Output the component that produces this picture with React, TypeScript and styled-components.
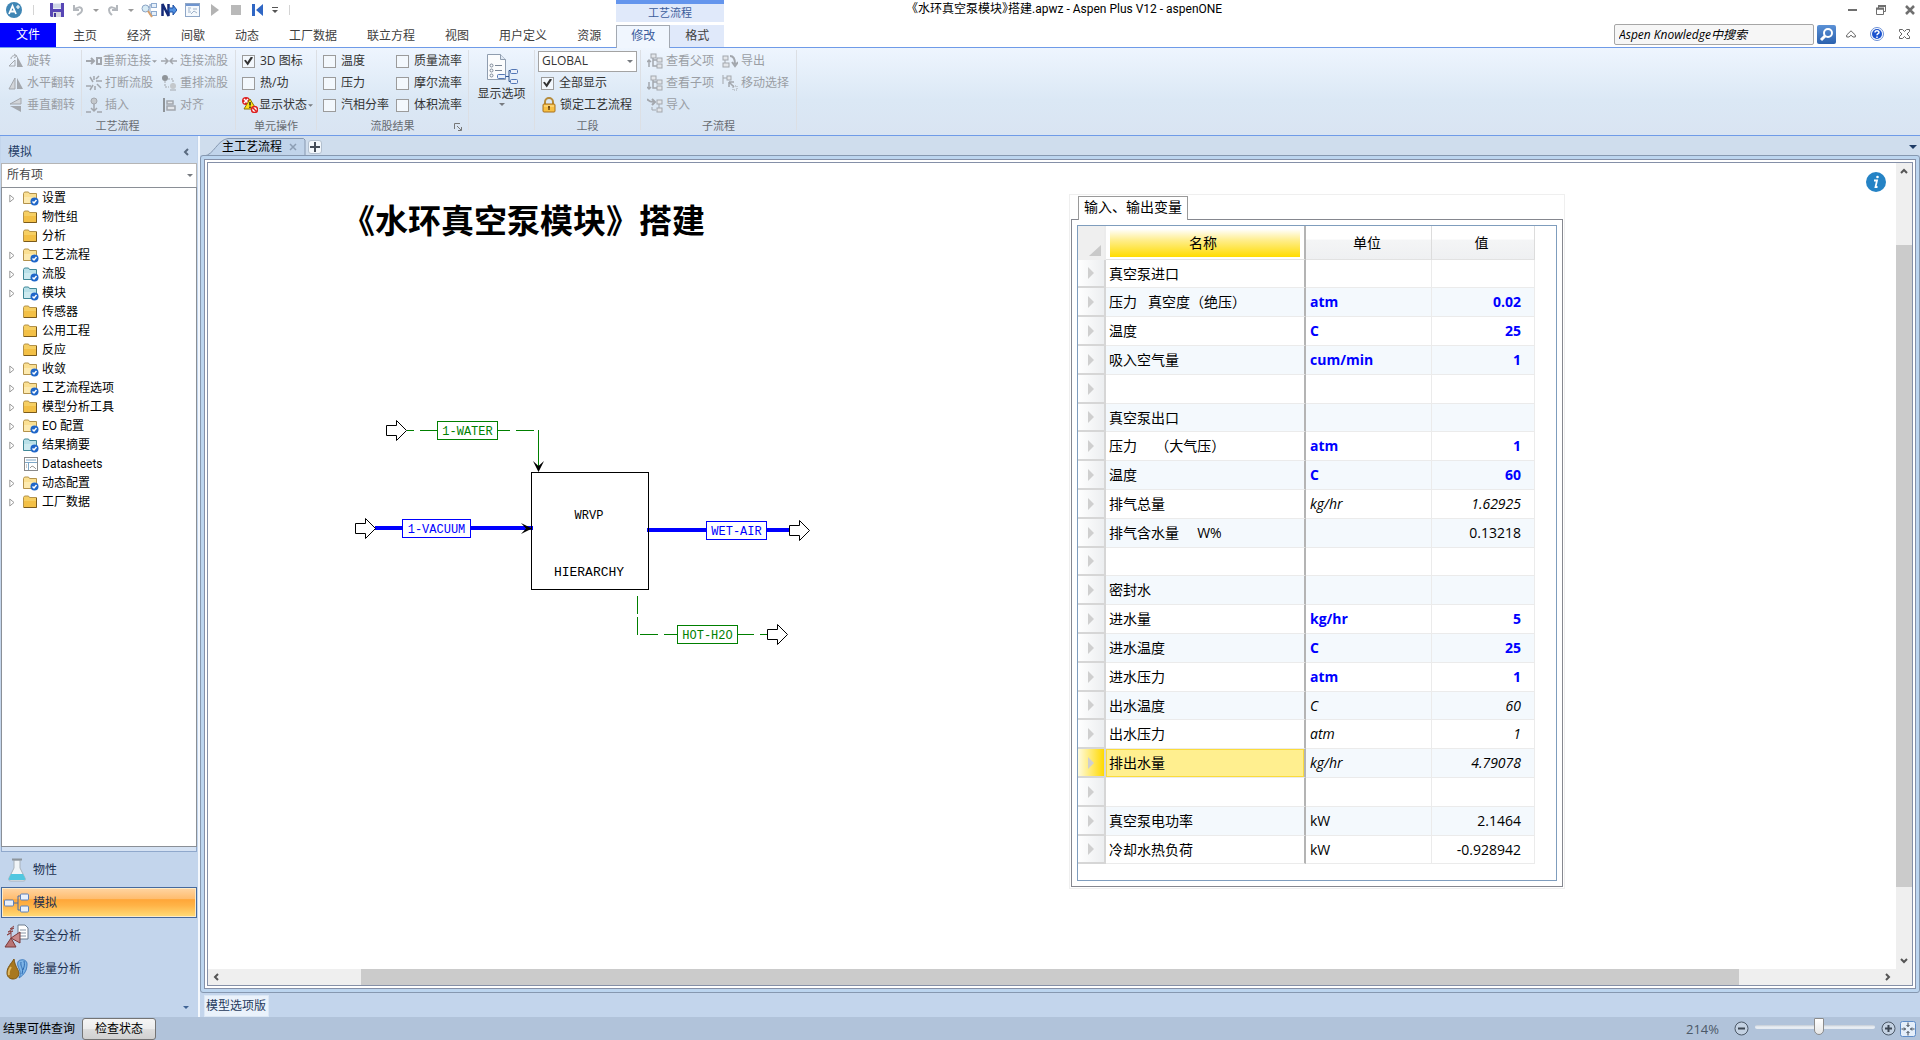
import React from "react";
import styled, { createGlobalStyle, css } from "styled-components";

const GlobalStyle = createGlobalStyle`
  *, *::before, *::after { box-sizing: border-box; }
  html, body, #root { height: 100%; }
  body {
    margin: 0;
    overflow: hidden;
    background: #ffffff;
    font-family: "Open Sans", "Noto Sans CJK SC", sans-serif;
    font-size: 12px;
    line-height: 18px;
    color: #000000;
  }
  button, input, select {
    font: inherit;
    color: inherit;
    margin: 0;
    padding: 0;
    border: 0;
    background: none;
    border-radius: 0;
  }
  svg { display: block; flex: none; }
  ul { list-style: none; margin: 0; padding: 0; }
`;

const Window = styled.div`
  display: flex;
  flex-direction: column;
  height: 100vh;
`;

/* ---------- title bar and tabs ---------- */

const Header = styled.header`
  flex: none;
  display: grid;
  grid-template-columns: 616px 108px 1fr 306px;
  grid-template-rows: 23px 24px;
  border-bottom: 1px solid #6f9be8;
  background: #ffffff;
`;

const QuickAccess = styled.div`
  display: flex;
  align-items: center;
  height: 20px;
  padding-left: 6px;
`;

const ToolButton = styled.button<{ $w: number }>`
  width: ${(p) => p.$w}px;
  height: 20px;
  display: flex;
  align-items: center;
  justify-content: center;
`;

const Divider = styled.span<{ $before: number; $after: number }>`
  width: 1px;
  height: 10px;
  margin: 0 ${(p) => p.$after}px 0 ${(p) => p.$before}px;
  background: #d4d4d4;
`;

const ContextTitle = styled.div`
  height: 22px;
  border-top: 4px solid #6495ed;
  background: #e0e9fa;
  color: #3b5c9c;
  text-align: center;
  font-size: 11px;
  line-height: 17px;
`;

const WindowTitle = styled.h1`
  grid-column: 3 / 4;
  margin: 0;
  padding-left: 188px;
  font-family: Roboto, "Noto Sans CJK SC", sans-serif;
  font-feature-settings: "halt";
  font-size: 12px;
  font-weight: 400;
  line-height: 18px;
  white-space: nowrap;
`;

const WindowButtons = styled.div`
  display: flex;
  justify-content: flex-end;
  gap: 9px;
  height: 18px;
`;

const Tabs = styled.nav`
  grid-column: 1 / 4;
  display: flex;
  height: 24px;
`;

const tabBox = css`
  height: 24px;
  padding: 2px 15px 0;
  color: #404040;
  white-space: nowrap;
  line-height: 20px;
`;

const FileTab = styled.button`
  width: 56px;
  margin-right: 2px;
  background: #0000ff;
  color: #ffffff;
`;

const Tab = styled.button<{ $kind?: "active" | "context" }>`
  ${tabBox}
  ${(p) =>
    p.$kind === "active" &&
    css`
      height: 23px;
      margin-top: 2px;
      padding: 0 14px 2px;
      border: 1px solid #a3a9b2;
      border-bottom: 0;
      background: #f0f6fe;
      color: #3b5c9c;
      z-index: 1;
    `}
  ${(p) =>
    p.$kind === "context" &&
    css`
      height: 22px;
      margin-top: 2px;
      padding-top: 0;
      background: #e0e9fa;
    `}
`;

const SearchArea = styled.div`
  display: flex;
  align-items: center;
  height: 22px;
`;

const SearchBox = styled.input`
  width: 200px;
  height: 21px;
  padding: 0 4px;
  border: 1px solid #a6a6a6;
  border-radius: 2px;
  background: #f6f6f6;
  font-style: italic;
  &::placeholder {
    color: #000000;
    opacity: 1;
    font-style: italic;
  }
`;

const SearchButton = styled.button`
  width: 19px;
  height: 19px;
  margin: 0 5px 0 3px;
  display: flex;
  align-items: center;
  justify-content: center;
  border-radius: 2px;
  background: linear-gradient(#5b91d6, #2c62ae);
`;

/* ---------- ribbon ---------- */

const Ribbon = styled.section`
  flex: none;
  display: flex;
  height: 88px;
  padding: 2px 0 0;
  border-bottom: 1px solid #6f9be8;
  background: linear-gradient(#eef5fe, #dbe8f5 60%, #d9e4f2);
`;

const Group = styled.div<{ $w: number }>`
  flex: none;
  width: ${(p) => p.$w}px;
  border-right: 1px solid transparent;
  border-image: linear-gradient(to bottom, #dcdfe4 0 79px, transparent 79px) 1;
  display: flex;
  flex-direction: column;
`;

const GroupBody = styled.div`
  display: flex;
  height: 66px;
`;

const GroupCaption = styled.div`
  position: relative;
  text-align: center;
  font-size: 11px;
  line-height: 19px;
  color: #666a70;
`;

const Launcher = styled.button`
  position: absolute;
  right: 6px;
  top: 7px;
`;

const Column = styled.div<{ $w: number; $ruled?: boolean; $pad?: number }>`
  width: ${(p) => p.$w}px;
  padding-left: ${(p) => p.$pad ?? 5}px;
  border-right: ${(p) => (p.$ruled ? "1px solid #dcdfe4" : "0")};
`;

const Command = styled.button<{ $muted?: boolean; $gap?: number }>`
  display: flex;
  align-items: center;
  gap: ${(p) => p.$gap ?? 3}px;
  height: 22px;
  color: ${(p) => (p.$muted ? "#9a9ea4" : "#333333")};
  white-space: nowrap;
`;

const CheckLabel = styled.label`
  display: flex;
  align-items: center;
  gap: 5px;
  height: 22px;
  color: #333333;
  white-space: nowrap;
`;

const CheckInput = styled.input`
  appearance: none;
  width: 13px;
  height: 13px;
  border: 1px solid #9b9b9b;
  background: #f3f8fd;
  display: grid;
  place-content: center;
  &:checked::before {
    content: "";
    width: 9px;
    height: 9px;
    background: #333333;
    clip-path: polygon(0 45%, 20% 35%, 38% 62%, 78% 0, 100% 12%, 42% 100%);
  }
`;

const BigCommand = styled.button`
  width: 100%;
  height: 66px;
  padding-top: 3px;
  display: flex;
  flex-direction: column;
  align-items: center;
  color: #333333;
`;

const SelectWrap = styled.div<{ $h: number }>`
  display: grid;
  align-items: center;
  height: ${(p) => p.$h}px;
  & > * { grid-area: 1 / 1; }
  & > svg { justify-self: end; margin-right: 4px; pointer-events: none; }
`;

const SectionSelect = styled.select`
  appearance: none;
  height: 21px;
  padding: 0 3px;
  border: 1px solid #a3a3a3;
  background: #ffffff;
  color: #333333;
`;

/* ---------- work area ---------- */

const Work = styled.div`
  flex: 1;
  min-height: 0;
  display: flex;
`;

const Side = styled.aside`
  flex: none;
  width: 200px;
  padding: 0 1px;
  border-right: 2px solid #f4f8fd;
  background: #c3d5ec;
  display: flex;
  flex-direction: column;
`;

const SideTitle = styled.div`
  display: flex;
  justify-content: space-between;
  align-items: center;
  height: 27px;
  padding: 4px 7px 0 7px;
  background: #cadbf0;
  color: #1e3c66;
`;

const ItemSelect = styled.select`
  appearance: none;
  height: 24px;
  padding: 0 5px 2px;
  border: 1px solid #b5b5b5;
  border-bottom: 0;
  background: #ffffff;
  color: #444444;
`;

const Tree = styled.ul`
  flex: 1;
  min-height: 0;
  padding: 1px 0;
  border: 1px solid #8a8f96;
  background: #ffffff;
`;

const TreeRow = styled.button`
  display: grid;
  grid-template-columns: 15px 15px auto;
  column-gap: 4px;
  align-items: center;
  height: 19px;
  padding-left: 2px;
  font-family: Roboto, "Noto Sans CJK SC", sans-serif;
  line-height: 19px;
  white-space: nowrap;
`;

const ExpanderBox = styled.span`
  display: block;
  padding-left: 5px;
`;

const Splitter = styled.div`
  height: 5px;
  border: 1px solid #8fa8cc;
  border-top: 0;
  background: #d5e2f3;
`;

const NavItem = styled.button<{ $active?: boolean }>`
  display: grid;
  grid-template-columns: 25px auto;
  column-gap: 4px;
  justify-content: start;
  justify-items: center;
  align-items: center;
  width: 100%;
  height: 31px;
  margin-top: 2px;
  padding-left: 2px;
  border: 1px solid transparent;
  color: #1a2f4f;
  ${(p) =>
    p.$active &&
    css`
      border-color: #46699c;
      box-shadow: inset 0 0 0 1px #fdebc8;
      background: linear-gradient(#ffd5a3, #ffbc6d 38%, #ffa638 40%, #ffb347 60%, #ffdc78);
    `}
`;

const SideFooter = styled.div`
  height: 33px;
  padding: 14px 8px 0 0;
  display: flex;
  justify-content: flex-end;
`;

const Main = styled.main`
  flex: 1;
  min-width: 0;
  display: flex;
  flex-direction: column;
  background: #c3d5ec;
`;

const SheetTabs = styled.div`
  display: flex;
  height: 19px;
  padding: 2px 2px 0 4px;
  background: #cfdded;
`;

const SheetTab = styled.div`
  display: grid;
  width: 101px;
  height: 18px;
  & > * { grid-area: 1 / 1; }
`;

const SheetLabel = styled.div`
  display: flex;
  align-items: center;
  gap: 7px;
  padding-left: 18px;
  z-index: 1;
`;

const AddSheet = styled.button`
  width: 14px;
  height: 14px;
  margin: 2px auto 0 3px;
  display: grid;
  place-content: center;
  border: 1px solid #b3c0cf;
  border-radius: 3px;
  background: #f3f7fb;
`;

const SheetMenu = styled.button`
  width: 11px;
  height: 17px;
  display: grid;
  place-content: center;
`;

const Frame = styled.div`
  flex: 1;
  min-height: 0;
  display: flex;
  padding: 3px;
  border: 1px solid #8698b0;
  border-radius: 3px;
  background: #bcd5ef;
`;

const FrameInner = styled.div`
  flex: 1;
  display: flex;
  padding: 2px;
  border: 1px solid #8590a8;
  background: #ffffff;
`;

const Viewport = styled.div`
  flex: 1;
  min-width: 0;
  display: grid;
  grid-template-columns: 1fr 16px;
  grid-template-rows: 1fr 16px;
  border: 1px solid #8590a8;
  background: #efefef;
`;

const Canvas = styled.div`
  position: relative;
  overflow: hidden;
  background: #ffffff;
`;

const CanvasTitle = styled.h2`
  position: absolute;
  left: 134px;
  top: 32px;
  margin: 0;
  font-family: "Noto Sans CJK SC", sans-serif;
  font-size: 33px;
  line-height: 48px;
  font-weight: 700;
  white-space: nowrap;
`;

const Diagram = styled.svg`
  position: absolute;
  left: 122px;
  top: 237px;
  font-family: "Liberation Mono", monospace;
  text-anchor: middle;
`;

const InfoButton = styled.button`
  position: absolute;
  right: 10px;
  top: 9px;
`;

const ScrollBar = styled.div<{ $vertical?: boolean }>`
  display: flex;
  flex-direction: ${(p) => (p.$vertical ? "column" : "row")};
  background: #efefef;
`;

const ScrollArrow = styled.button`
  flex: none;
  width: 16px;
  height: 16px;
  display: grid;
  place-content: center;
`;

const ScrollSpace = styled.div<{ $grow: number }>`
  flex: ${(p) => p.$grow} 0 0;
`;

const ScrollThumb = styled.div<{ $grow: number }>`
  flex: ${(p) => p.$grow} 0 0;
  background: #cbcbcb;
`;

const BottomTabs = styled.div`
  flex: none;
  display: flex;
  height: 24px;
  padding: 2px 0 0 4px;
`;

const BottomTab = styled.button`
  height: 22px;
  padding: 0 2px 0 1px;
  background: #eaf2fb;
  border: 1px solid #dbe7f5;
  color: #24395c;
`;

/* ---------- variable table ---------- */

const VariablePanel = styled.section`
  position: absolute;
  left: 861px;
  top: 31px;
  padding: 1px;
  border: 1px solid #efefef;
  background: #ffffff;
`;

const PanelTab = styled.button`
  display: block;
  height: 24px;
  margin: 0 0 -1px 7px;
  padding: 0 5px 3px;
  border: 1px solid #9a9a9a;
  border-bottom: 0;
  background: #ffffff;
  position: relative;
  font-size: 14px;
  line-height: 20px;
`;

const PanelBorder = styled.div`
  padding: 5px;
  border: 1px solid #85878f;
`;

const PanelInner = styled.div`
  padding: 0 21px 16px 0;
  border: 1px solid #7f9dbd;
`;

const Table = styled.table`
  border-collapse: separate;
  border-spacing: 0;
  table-layout: fixed;
  width: 457px;
  font-size: 14px;
  line-height: 20px;
  th, td { padding: 0; font-weight: 400; white-space: pre; }
`;

const CornerCell = styled.th`
  width: 28px;
  border-right: 2px solid #ececec;
  background: #efefef;
  vertical-align: bottom;
  & > svg { margin: 0 3px 4px auto; }
`;

const HeadCell = styled.th<{ $w: number }>`
  width: ${(p) => p.$w}px;
  height: 34px;
  border-right: 1px solid #dcdcdc;
  border-bottom: 1px solid #e2e2e2;
  background: linear-gradient(#ffffff 40%, #f4f5f6 42%, #eff0f2);
  && { padding-right: 3px; }
`;

const NameHead = styled.th`
  width: 200px;
  height: 34px;
  border-right: 2px solid #b4b4b4;
  border-bottom: 1px solid #e2e2e2;
  background: #ffffff;
`;

const NameHighlight = styled.div`
  height: 28px;
  margin: 2px 4px 1px;
  padding-right: 4px;
  line-height: 28px;
  background: linear-gradient(#ffffff, #ffee8c 40%, #ffdc00);
`;

const Row = styled.tr`
  height: 29px;
  &:nth-child(5n + 1) { height: 28px; }
  td { border-bottom: 1px solid #ebebeb; border-right: 1px solid #ebebeb; }
  &:nth-child(even) td { background: #f4f9fd; }
`;

const RowHead = styled.th<{ $selected?: boolean }>`
  border-right: 2px solid #d6d6d6;
  border-bottom: 2px solid #d6d6d6;
  background: ${(p) =>
    p.$selected ? "linear-gradient(to right, #fffbe0, #ffd900)" : "linear-gradient(to right, #ffffff, #eceef0)"};
  & > svg { margin-left: 10px; }
`;

const NameCell = styled.td<{ $selected?: boolean }>`
  &&& {
    padding-left: 3px;
    border-right: 2px solid #b4b4b4;
    ${(p) =>
      p.$selected &&
      css`
        background: #ffef8f;
        box-shadow: inset 0 0 0 1px #fbdc3c;
      `}
  }
`;

type Style = "input" | "result" | "plain";

const Value = styled.span<{ $style: Style }>`
  ${(p) => p.$style === "input" && css`font-weight: 700; color: #0000ff;`}
  ${(p) => p.$style === "result" && css`font-style: italic;`}
`;

const UnitCell = styled.td`
  && { padding-left: 4px; }
`;

const NumberCell = styled.td`
  && { padding-right: 13px; text-align: right; }
`;

/* ---------- status bar ---------- */

const StatusBar = styled.footer`
  flex: none;
  display: flex;
  align-items: center;
  height: 23px;
  padding-left: 3px;
  background: #b1c3da;
`;

const CheckButton = styled.button`
  width: 74px;
  height: 22px;
  margin-left: 7px;
  border: 1px solid #747474;
  border-radius: 3px;
  background: linear-gradient(#f5f5f5, #ececec 50%, #dddddd 52%, #d0d0d0);
`;

const ZoomArea = styled.div`
  display: flex;
  align-items: center;
  margin-left: auto;
`;

const ZoomText = styled.output`
  width: 48px;
  font-size: 13px;
  color: #4c5968;
`;

const ZoomSlider = styled.input`
  appearance: none;
  width: 120px;
  height: 22px;
  margin: 0 6px 4px;
  &::-webkit-slider-runnable-track {
    height: 4px;
    border-radius: 2px;
    background: linear-gradient(#c4cbd4, #e9eef4 50%, #e4eaf1);
  }
  &::-webkit-slider-thumb {
    appearance: none;
    width: 10px;
    height: 17px;
    margin-top: -7px;
    background: linear-gradient(#ffffff, #e6e6e6);
    border: 1px solid #8c8c8c;
    border-radius: 1px 1px 5px 5px;
  }
`;

/* ---------- small drawings ---------- */

const Caret = ({ color = "#777b80", w = 6 }: { color?: string; w?: number }) => (
  <svg width={w} height={Math.ceil(w / 2)} viewBox="0 0 6 3">
    <path d="M0 0h6L3 3z" fill={color} />
  </svg>
);

const Chevron = ({ turn = 0, color = "#555" }: { turn?: number; color?: string }) => (
  <svg width="8" height="8" viewBox="0 0 8 8">
    <path d="M1 6 4 3l3 3" fill="none" stroke={color} strokeWidth="2" transform={`rotate(${turn} 4 4)`} />
  </svg>
);

type IconName =
  | "rotate" | "flipH" | "flipV" | "reconnect" | "break" | "insert" | "connect" | "reroute" | "align"
  | "status" | "lock" | "parent" | "child" | "import" | "export" | "move";

const G = "#a3a7ad";
const grayBox = { fill: "#e3e6ea", stroke: G };

const icons: Record<IconName, React.ReactNode> = {
  rotate: (<><path d="M1 13 7 7v6z" fill="none" stroke={G} /><path d="M9 3v11h6z" fill={G} /><path d="M3 6c0-3 3-4 5-3M6 1l3 2-3 2" fill="none" stroke={G} /></>),
  flipH: (<><path d="M1 14 7 3v11z" fill="#d3d6da" stroke={G} /><path d="M9 3v11h6z" fill={G} /></>),
  flipV: (<><path d="M2 7 13 1v6z" fill="#d3d6da" stroke={G} /><path d="M2 9h11v6z" fill={G} /></>),
  reconnect: (<><path d="M0 8h8M5 5l3 3-3 3" fill="none" stroke={G} strokeWidth="2" /><rect x="11" y="5" width="4" height="6" fill="none" stroke={G} strokeWidth="2" /></>),
  break: (<path d="M0 11h5M10 6h6M7 7 4 2M8 5V1M10 4l3-3M7 10l-3 5M9 11v4M11 9l4 4" fill="none" stroke={G} strokeWidth="1.5" />),
  insert: (<><circle cx="8" cy="4" r="3" fill="#c4c8cc" stroke={G} /><path d="M8 7v7M5 11l3 3 3-3M0 15h5M11 15h5" fill="none" stroke={G} strokeWidth="1.5" /></>),
  connect: (<path d="M0 8h7M4 5l3 3-3 3M16 8H9M12 5 9 8l3 3" fill="none" stroke={G} strokeWidth="1.5" />),
  reroute: (<><circle cx="4" cy="3" r="3" fill="#8f9499" /><path d="M4 6v6h4M7 4h5v5" fill="none" stroke={G} strokeDasharray="2 1" /><circle cx="12" cy="11" r="3" fill="#c4c8cc" /><path d="M9 15h6" stroke={G} /></>),
  align: (<><path d="M3 1v14" stroke="#8f9499" strokeWidth="2" /><path d="M6 4h6v3H6zM6 9h8v4H6z" fill="#e3e6ea" stroke={G} strokeWidth="1.5" /></>),
  status: (<><circle cx="4" cy="4" r="4" fill="#dd1f1f" /><path d="m2 2 4 4m0-4L2 6" stroke="#fff" strokeWidth="1.5" /><path d="M8 2 14 12H2z" fill="#ffe21a" stroke="#8a7400" /><path d="M8 5v3.500M8 9.500v1.500" stroke="#222" strokeWidth="1.500" /><circle cx="12.500" cy="12.500" r="3" fill="#fff" stroke="#dd1f1f" strokeWidth="1.500" /><path d="m10.500 10.500 4 4" stroke="#dd1f1f" strokeWidth="1.500" /></>),
  lock: (<><path d="M4 7V5a4 4 0 0 1 8 0v2" fill="none" stroke="#b58b3a" strokeWidth="2" /><rect x="2" y="7" width="12" height="8" rx="1" fill="#f7c044" stroke="#a8701c" /><path d="M3 9h10" stroke="#ffe39a" /><path d="M8 9v4M7 10h2" stroke="#6b4510" strokeWidth="1.500" /></>),
  parent: (<><rect x="4" y="1" width="5" height="4" {...grayBox} /><rect x="10" y="5" width="5" height="4" {...grayBox} /><rect x="10" y="11" width="5" height="4" {...grayBox} /><path d="M6 5v8h4M6 7h4M2 14V7M0 9l2-2 2 2" fill="none" stroke={G} strokeWidth="1.500" /></>),
  child: (<><rect x="4" y="1" width="5" height="4" {...grayBox} /><rect x="10" y="5" width="5" height="4" {...grayBox} /><rect x="10" y="11" width="5" height="4" {...grayBox} /><path d="M6 5v8h4M6 7h4M2 7v7M0 12l2 2 2-2" fill="none" stroke={G} strokeWidth="1.500" /></>),
  import: (<><path d="M0 2c2 3 4 3 7 3M5 2l3 3-3 3" fill="none" stroke={G} strokeWidth="2" /><rect x="10" y="3" width="5" height="4" {...grayBox} /><rect x="10" y="11" width="5" height="4" {...grayBox} /><path d="M12 7v4M9 13H5v-3" fill="none" stroke={G} /></>),
  export: (<><rect x="1" y="3" width="5" height="4" {...grayBox} /><rect x="1" y="10" width="6" height="4" {...grayBox} /><path d="M3 7v3" stroke={G} /><path d="M8 3c4 0 5 3 5 8M10 9l3 4 3-4" fill="none" stroke={G} strokeWidth="2" /></>),
  move: (<><path d="M1 0v9M1 3h4" stroke={G} /><rect x="5" y="1" width="4" height="4" {...grayBox} /><path d="M7 7h5M7 7v5M7 7l5 5" stroke={G} strokeWidth="1.500" /><path d="M11 11h4v4h-4z" fill="none" stroke={G} strokeDasharray="1 1" /></>),
};

const Icon = ({ name }: { name: IconName }) => (
  <svg width="16" height="16" viewBox="0 0 16 16">{icons[name]}</svg>
);

const DisplayOptionsIcon = () => (
  <svg width="32" height="32" viewBox="0 0 32 32">
    <path d="M1.500 1.500h13l5 5v20h-18z" fill="#fbfcfd" stroke="#8f9daf" />
    <path d="M14.500 1.500v5h5" fill="#dfe8f3" stroke="#8f9daf" />
    <g fill="none" stroke="#7a8696"><circle cx="5.500" cy="12.500" r="1.500" /><circle cx="5.500" cy="17.500" r="1.500" /><circle cx="5.500" cy="22.500" r="1.500" /><path d="M9 12.500h7M9 17.500h7" /></g>
    <path d="M19 23.500h4v-6h2M23 23.500v5h2" fill="none" stroke="#35578f" />
    <g fill="#e9f0fb" stroke="#5377b5"><rect x="11.500" y="21.500" width="8" height="4" rx="1" /><rect x="24.500" y="16.500" width="7" height="4" rx="1" /><rect x="24.500" y="26.500" width="7" height="4" rx="1" /></g>
  </svg>
);

type FolderKind = "plain" | "done" | "results" | "sheet";

const TreeIcon = ({ kind }: { kind: FolderKind }) => {
  if (kind === "sheet")
    return (
      <svg width="16" height="15" viewBox="0 0 16 15">
        <rect x="1.500" y=".5" width="13" height="13" fill="#fff" stroke="#8a8a8a" />
        <path d="M3 3h10M2 5.500h12M5.500 6v7" stroke="#7fa8c8" />
        <path d="M7 11l2-2 2 1 2 2M3 8h1M3 10h1" fill="none" stroke="#999" />
      </svg>
    );
  const teal = kind === "results";
  const open = kind !== "plain";
  return (
    <svg width="16" height="15" viewBox="0 0 16 15">
      <path d="M.5 12.500V2.500l1-1.500h4l1 1.500h7v10z" fill={teal ? "#b9e0e8" : open ? "#fbe093" : "#f6cf63"} stroke={teal ? "#3f8797" : "#b3924b"} />
      <path d="M1 6h12v6H1z" fill={teal ? "#d5eef2" : open ? "#fdeebb" : "#f2b93b"} opacity=".7" />
      {!open && <path d="M13.500 3v9.500H1" fill="none" stroke="#7a5a1c" />}
      {open && (
        <>
          <circle cx="11.500" cy="10.500" r="4" fill="#1f66c9" />
          <path d="m9.500 10.500 1.500 1.500 2.500-3" fill="none" stroke="#fff" strokeWidth="1.500" />
        </>
      )}
    </svg>
  );
};

const Expander = () => (
  <svg width="6" height="9" viewBox="0 0 6 9">
    <path d="M.8 1v7L5 4.500z" fill="#fff" stroke="#9a9a9a" />
  </svg>
);

const RowArrow = () => (
  <svg width="7" height="12" viewBox="0 0 7 12">
    <path d="M0 0v12l6-6z" fill="#cfcfcf" />
  </svg>
);

const FlaskIcon = () => (
  <svg width="24" height="24" viewBox="0 0 24 24">
    <path d="M9 2v8L4 20c-1 2 0 3 2 3h12c2 0 3-1 2-3l-5-10V2z" fill="#f1f5f8" stroke="#a9b2ba" />
    <path d="M6 16 4 20c-1 2 0 2 2 2h12c2 0 3 0 2-2l-2-4z" fill="#52c7e0" />
    <path d="M7 1.500h10" stroke="#8d959c" strokeWidth="2" />
  </svg>
);

const FlowIcon = () => (
  <svg width="25" height="22" viewBox="0 0 25 22">
    <path d="M9 11h5M17 4h-3v14h3" fill="none" stroke="#4a6ea6" />
    <g fill="#eaf1fb" stroke="#5c80ba"><rect x=".5" y="8" width="9" height="6" rx="1" /><rect x="16.500" y="2" width="8" height="6" rx="1" /><rect x="16.500" y="14" width="8" height="6" rx="1" /></g>
  </svg>
);

const SafetyIcon = () => (
  <svg width="25" height="24" viewBox="0 0 25 24">
    <path d="M14 1h7l3 3v11H14z" fill="#fff" stroke="#6d7c8e" />
    <path d="M16 6h6M16 9h6M16 12h6" stroke="#8795a5" />
    <path d="M1 23 7 14l5 9z" fill="#b97474" stroke="#7b3a3a" />
    <path d="m7 14 9-6v11z" fill="#c98a8a" stroke="#7b3a3a" />
    <path d="M7 14V9L3 11l6-4-5 1 6-4-4 1 4-3" fill="none" stroke="#8e4545" />
  </svg>
);

const EnergyIcon = () => (
  <svg width="22" height="22" viewBox="0 0 22 22">
    <path d="M8 1C5 6 1 9 1 15c0 4 3 6 6 6 4 0 6-3 6-6 0-3-4-6-5-14z" fill="#a87820" stroke="#7b5510" />
    <path d="M5 9c-2 3-3 5-2 8" stroke="#e0b860" fill="none" strokeWidth="2" />
    <path d="M13 20c6-4 8-8 8-14 0-3-3-5-6-4-3 0-4 3-3 6 1 4 4 6 1 12z" fill="#7db4e6" stroke="#3d7cc0" />
    <path d="M15 4c-1 5 3 6 1 12M18 3c1 4 0 6-1 9" stroke="#2f6cb3" fill="none" />
  </svg>
);

/* ---------- data ---------- */

const tabs = ["主页", "经济", "间歇", "动态", "工厂数据", "联立方程", "视图", "用户定义", "资源"];

const tree: { label: string; kind: FolderKind; expandable?: boolean }[] = [
  { label: "设置", kind: "done", expandable: true },
  { label: "物性组", kind: "plain" },
  { label: "分析", kind: "plain" },
  { label: "工艺流程", kind: "done", expandable: true },
  { label: "流股", kind: "results", expandable: true },
  { label: "模块", kind: "results", expandable: true },
  { label: "传感器", kind: "plain" },
  { label: "公用工程", kind: "plain" },
  { label: "反应", kind: "plain" },
  { label: "收敛", kind: "done", expandable: true },
  { label: "工艺流程选项", kind: "done", expandable: true },
  { label: "模型分析工具", kind: "plain", expandable: true },
  { label: "EO 配置", kind: "done", expandable: true },
  { label: "结果摘要", kind: "results", expandable: true },
  { label: "Datasheets", kind: "sheet" },
  { label: "动态配置", kind: "done", expandable: true },
  { label: "工厂数据", kind: "plain", expandable: true },
];

const variables: { name: string; unit?: string; value?: string; style?: Style; selected?: boolean }[] = [
  { name: "真空泵进口" },
  { name: "压力   真空度（绝压）", unit: "atm", value: "0.02", style: "input" },
  { name: "温度", unit: "C", value: "25", style: "input" },
  { name: "吸入空气量", unit: "cum/min", value: "1", style: "input" },
  { name: "" },
  { name: "真空泵出口" },
  { name: "压力     （大气压）", unit: "atm", value: "1", style: "input" },
  { name: "温度", unit: "C", value: "60", style: "input" },
  { name: "排气总量", unit: "kg/hr", value: "1.62925", style: "result" },
  { name: "排气含水量     W%", value: "0.13218" },
  { name: "" },
  { name: "密封水" },
  { name: "进水量", unit: "kg/hr", value: "5", style: "input" },
  { name: "进水温度", unit: "C", value: "25", style: "input" },
  { name: "进水压力", unit: "atm", value: "1", style: "input" },
  { name: "出水温度", unit: "C", value: "60", style: "result" },
  { name: "出水压力", unit: "atm", value: "1", style: "result" },
  { name: "排出水量", unit: "kg/hr", value: "4.79078", style: "result", selected: true },
  { name: "" },
  { name: "真空泵电功率", unit: "kW", value: "2.1464" },
  { name: "冷却水热负荷", unit: "kW", value: "-0.928942" },
];

/* ---------- parts ---------- */

const Check = ({ label, on }: { label: string; on?: boolean }) => (
  <CheckLabel>
    <CheckInput type="checkbox" defaultChecked={on} />
    {label}
  </CheckLabel>
);

const TopBar = () => (
  <Header>
    <QuickAccess>
      <svg width="16" height="16" viewBox="0 0 16 16" aria-hidden="true">
        <circle cx="8" cy="8" r="8" fill="#3f86b5" />
        <path d="m3 12 3.500-8L10 12M4.500 9.500h4" fill="none" stroke="#fff" strokeWidth="1.800" />
        <path d="M12 3v4M10 5h4" stroke="#fff" strokeWidth="1.200" />
      </svg>
      <Divider $before={11} $after={13} />
      <ToolButton $w={20} aria-label="保存">
        <svg width="14" height="14" viewBox="0 0 14 14">
          <path d="M0 0h14v14H1l-1-1z" fill="#5746b5" />
          <path d="M3 0h8v6H3z" fill="#e9eef7" /><path d="M3 2h8M3 4h8" stroke="#b4bfd6" />
          <path d="M3 9h8v5H3z" fill="#d4d4de" /><path d="M4 10h2v4H4z" fill="#43389a" />
        </svg>
      </ToolButton>
      <ToolButton $w={22} aria-label="撤消">
        <svg width="12" height="12" viewBox="0 0 12 12"><path d="M2 1v5h5M2 6c2-3 8-4 8 0 0 3-3 4-5 5" fill="none" stroke="#b4b8bd" strokeWidth="2" /></svg>
      </ToolButton>
      <ToolButton $w={14} aria-label="撤消列表"><Caret color="#9a9a9a" /></ToolButton>
      <ToolButton $w={20} aria-label="恢复">
        <svg width="12" height="12" viewBox="0 0 12 12"><path d="M10 1v5H5M10 6C8 3 2 2 2 6c0 3 2 4 3 5" fill="none" stroke="#b4b8bd" strokeWidth="2" /></svg>
      </ToolButton>
      <ToolButton $w={16} aria-label="恢复列表"><Caret color="#9a9a9a" /></ToolButton>
      <ToolButton $w={20} aria-label="查找">
        <svg width="16" height="16" viewBox="0 0 16 16">
          <path d="M6 5h3M9 2v11M9 3h2M9 12h2" stroke="#8aa3c4" fill="none" />
          <rect x="10.500" y="1.500" width="5" height="4" fill="#e6f0fa" stroke="#8fabcf" /><rect x="10.500" y="9.500" width="5" height="4" fill="#e6f0fa" stroke="#8fabcf" />
          <circle cx="4.500" cy="6.500" r="3.500" fill="#d7ebf5" stroke="#8aa3c4" /><path d="m7 9 4 6" stroke="#d9a06a" strokeWidth="2" />
        </svg>
      </ToolButton>
      <ToolButton $w={20} aria-label="下一步">
        <svg width="16" height="14" viewBox="0 0 16 14">
          <path d="M1.500 13V1l6 12V1" fill="none" stroke="#142a78" strokeWidth="2.500" />
          <path d="M8 5h4V2l4 5-4 5V9H8z" fill="#4f8fe0" stroke="#1d4fa3" />
        </svg>
      </ToolButton>
      <ToolButton $w={26} aria-label="控制面板">
        <svg width="15" height="14" viewBox="0 0 15 14">
          <rect x=".5" y=".5" width="14" height="13" fill="#f5f9fd" stroke="#8ea6c7" /><path d="M1 2h13" stroke="#6f95cf" strokeWidth="2" />
          <path d="M3 5h3M3 7h2M3 9h3M8 6h4M6 11l3-3 3 2" fill="none" stroke="#9fb2c9" />
        </svg>
      </ToolButton>
      <ToolButton $w={20} aria-label="运行">
        <svg width="8" height="12" viewBox="0 0 8 12"><path d="M0 0v12l8-6z" fill="#b3b3b3" /></svg>
      </ToolButton>
      <ToolButton $w={22} aria-label="停止">
        <svg width="10" height="10" viewBox="0 0 10 10"><path d="M0 0h10v10H0z" fill="#b9b9b9" /></svg>
      </ToolButton>
      <ToolButton $w={22} aria-label="重新初始化">
        <svg width="12" height="12" viewBox="0 0 12 12"><path d="M0 0h3v12H0zM11 0v12L4 6z" fill="#2f66c4" /></svg>
      </ToolButton>
      <ToolButton $w={12} aria-label="自定义工具栏">
        <svg width="6" height="6" viewBox="0 0 6 6"><path d="M0 0h6v1H0zM0 3h6L3 6z" fill="#555" /></svg>
      </ToolButton>
      <Divider $before={8} $after={0} />
    </QuickAccess>
    <ContextTitle>工艺流程</ContextTitle>
    <WindowTitle>《水环真空泵模块》搭建.apwz - Aspen Plus V12 - aspenONE</WindowTitle>
    <WindowButtons>
      <ToolButton $w={20} aria-label="最小化"><svg width="9" height="2"><path d="M0 0h9v2H0z" fill="#6f6f6f" /></svg></ToolButton>
      <ToolButton $w={20} aria-label="还原">
        <svg width="10" height="10" viewBox="0 0 10 10"><path d="M.5 4h7v5.500h-7zM2.500 4V1h7v5.500h-2" fill="none" stroke="#6f6f6f" /><path d="M0 3.500h8M2 1h8" stroke="#6f6f6f" strokeWidth="2" /></svg>
      </ToolButton>
      <ToolButton $w={20} aria-label="关闭"><svg width="10" height="10" viewBox="0 0 10 10"><path d="m1 1 8 8M9 1 1 9" stroke="#6f6f6f" strokeWidth="2.500" /></svg></ToolButton>
    </WindowButtons>
    <Tabs>
      <FileTab>文件</FileTab>
      {tabs.map((t) => <Tab key={t}>{t}</Tab>)}
      <Tab $kind="active">修改</Tab>
      <Tab $kind="context">格式</Tab>
    </Tabs>
    <SearchArea>
      <SearchBox type="search" placeholder="Aspen Knowledge中搜索" aria-label="Aspen Knowledge中搜索" />
      <SearchButton aria-label="搜索">
        <svg width="15" height="15" viewBox="0 0 15 15"><circle cx="9" cy="6" r="4" fill="none" stroke="#fff" strokeWidth="2" /><path d="m6 9-4 4" stroke="#fff" strokeWidth="3" /></svg>
      </SearchButton>
      <ToolButton $w={20} aria-label="折叠功能区">
        <svg width="10" height="8" viewBox="0 0 10 8"><path d="M5 .8 9.300 5v2H7L5 5.200 3 7H.7V5z" fill="#fff" stroke="#666" /></svg>
      </ToolButton>
      <ToolButton $w={32} aria-label="帮助">
        <svg width="14" height="14" viewBox="0 0 14 14"><circle cx="7" cy="7" r="6.500" fill="#fff" stroke="#6d90d6" /><circle cx="7" cy="7" r="5" fill="#1b53cf" /><path d="M5 5.500c0-2.500 4-2.500 4 0 0 1.200-2 1.300-2 2.800M7 9.500V11" fill="none" stroke="#fff" strokeWidth="1.500" /></svg>
      </ToolButton>
      <ToolButton $w={22} aria-label="关闭文档">
        <svg width="11" height="10" viewBox="0 0 11 10"><path d="M.5.5h3l2 2 2-2h3v2L8 5l2.500 2.500v2h-3l-2-2-2 2h-3v-2L3 5 .5 2.500z" fill="#fff" stroke="#666" /></svg>
      </ToolButton>
    </SearchArea>
  </Header>
);

const RibbonBar = () => (
  <Ribbon>
    <Group $w={236}>
      <GroupBody>
        <Column $w={82} $pad={8} $ruled>
          <Command $muted><Icon name="rotate" />旋转</Command>
          <Command $muted><Icon name="flipH" />水平翻转</Command>
          <Command $muted><Icon name="flipV" />垂直翻转</Command>
        </Column>
        <Column $w={79} $pad={4}>
          <Command $muted $gap={1}><Icon name="reconnect" />重新连接<Caret color="#9a9ea4" w={5} /></Command>
          <Command $muted><Icon name="break" />打断流股</Command>
          <Command $muted><Icon name="insert" />插入</Command>
        </Column>
        <Column $w={74} $pad={0}>
          <Command $muted><Icon name="connect" />连接流股</Command>
          <Command $muted><Icon name="reroute" />重排流股</Command>
          <Command $muted><Icon name="align" />对齐</Command>
        </Column>
      </GroupBody>
      <GroupCaption>工艺流程</GroupCaption>
    </Group>
    <Group $w={81}>
      <GroupBody>
        <Column $w={80} $pad={6}>
          <Check label="3D 图标" on />
          <Check label="热/功" />
          <Command $gap={1}><Icon name="status" />显示状态<Caret w={5} /></Command>
        </Column>
      </GroupBody>
      <GroupCaption>单元操作</GroupCaption>
    </Group>
    <Group $w={152}>
      <GroupBody>
        <Column $w={73} $pad={6}>
          <Check label="温度" />
          <Check label="压力" />
          <Check label="汽相分率" />
        </Column>
        <Column $w={78} $pad={6}>
          <Check label="质量流率" />
          <Check label="摩尔流率" />
          <Check label="体积流率" />
        </Column>
      </GroupBody>
      <GroupCaption>
        流股结果
        <Launcher aria-label="流股结果选项">
          <svg width="8" height="8" viewBox="0 0 8 8"><path d="M.5 6V.5H6M3 3l4 4M7.500 4v3.500H4" fill="none" stroke="#777" /></svg>
        </Launcher>
      </GroupCaption>
    </Group>
    <Group $w={66}>
      <BigCommand>
        <DisplayOptionsIcon />
        显示选项
        <Caret />
      </BigCommand>
    </Group>
    <Group $w={106}>
      <GroupBody>
        <Column $w={102} $pad={3}>
          <SelectWrap $h={22}>
            <SectionSelect aria-label="工段"><option>GLOBAL</option></SectionSelect>
            <Caret />
          </SelectWrap>
          <Column $w={99} $pad={3}>
            <Check label="全部显示" on />
            <Command $gap={3}><Icon name="lock" />锁定工艺流程</Command>
          </Column>
        </Column>
      </GroupBody>
      <GroupCaption>工段</GroupCaption>
    </Group>
    <Group $w={156}>
      <GroupBody>
        <Column $w={75} $pad={6}>
          <Command $muted><Icon name="parent" />查看父项</Command>
          <Command $muted><Icon name="child" />查看子项</Command>
          <Command $muted><Icon name="import" />导入</Command>
        </Column>
        <Column $w={80} $pad={6}>
          <Command $muted><Icon name="export" />导出</Command>
          <Command $muted><Icon name="move" />移动选择</Command>
        </Column>
      </GroupBody>
      <GroupCaption>子流程</GroupCaption>
    </Group>
  </Ribbon>
);

const Sidebar = () => (
  <Side>
    <SideTitle>
      模拟
      <button aria-label="折叠"><Chevron turn={-90} color="#5a6b80" /></button>
    </SideTitle>
    <SelectWrap $h={24}>
      <ItemSelect aria-label="项目筛选"><option>所有项</option></ItemSelect>
      <Caret />
    </SelectWrap>
    <Tree>
      {tree.map((n) => (
        <li key={n.label}>
          <TreeRow>
            <span>{n.expandable && <ExpanderBox><Expander /></ExpanderBox>}</span>
            <TreeIcon kind={n.kind} />
            {n.label}
          </TreeRow>
        </li>
      ))}
    </Tree>
    <Splitter />
    <nav>
      <NavItem><FlaskIcon />物性</NavItem>
      <NavItem $active><FlowIcon />模拟</NavItem>
      <NavItem><SafetyIcon />安全分析</NavItem>
      <NavItem><EnergyIcon />能量分析</NavItem>
    </nav>
    <SideFooter><button aria-label="配置按钮"><Caret color="#3f6394" /></button></SideFooter>
  </Side>
);

const FlowArrow = ({ x, y }: { x: number; y: number }) => (
  <path d={`M${x} ${y - 5}h10v-5l10 10-10 10v-5H${x}z`} fill="#fff" stroke="#000" />
);

const StreamTag = ({ x, y, w, color, label }: { x: number; y: number; w: number; color: string; label: string }) => (
  <g>
    <rect x={x} y={y} width={w} height="18" fill="#fff" stroke={color} />
    <text x={x + w / 2} y={y + 13} fill={color} fontSize="12">{label}</text>
  </g>
);

const Flowsheet = () => (
  <Diagram width="500" height="260" viewBox="0 0 500 260">
    <g fill="none" stroke="#007f00" shapeRendering="crispEdges">
      <path d="M77 30.500h7M90 30.500h17M168 30.500h12M186 30.500h18M208.500 30v36" />
      <path d="M307.500 196v18M307.500 217v18M310 234.500h18M334 234.500h13M408 234.500h16M430 234.500h7" />
    </g>
    <g stroke="#0000ff" strokeWidth="4" shapeRendering="crispEdges">
      <path d="M45 128h158M317 130h143" />
    </g>
    <rect x="201.500" y="72.500" width="117" height="117" fill="none" stroke="#000" />
    <path d="m203 61 5.500 5 5.500-5-5.500 11z" />
    <path d="m191 123 11 5.500-11 5.500 5-5.500z" />
    <FlowArrow x={56.5} y={30.5} />
    <FlowArrow x={25.5} y={128.5} />
    <FlowArrow x={459.5} y={130.5} />
    <FlowArrow x={437.5} y={234.5} />
    <StreamTag x={107.5} y={21.5} w={60} color="#007f00" label="1-WATER" />
    <StreamTag x={72.5} y={119.5} w={68} color="#0000ff" label="1-VACUUM" />
    <StreamTag x={376.5} y={121.5} w={60} color="#0000ff" label="WET-AIR" />
    <StreamTag x={347.5} y={225.5} w={60} color="#007f00" label="HOT-H2O" />
    <text x="259" y="119" fontSize="12">WRVP</text>
    <text x="259" y="176" fontSize="13">HIERARCHY</text>
  </Diagram>
);

const VariableTable = () => (
  <VariablePanel>
    <PanelTab>输入、输出变量</PanelTab>
    <PanelBorder>
      <PanelInner>
        <Table>
          <thead>
            <tr>
              <CornerCell><svg width="12" height="11"><path d="M12 0v11H0z" fill="#c9c9c9" /></svg></CornerCell>
              <NameHead scope="col"><NameHighlight>名称</NameHighlight></NameHead>
              <HeadCell scope="col" $w={126}>单位</HeadCell>
              <HeadCell scope="col" $w={103}>值</HeadCell>
            </tr>
          </thead>
          <tbody>
            {variables.map((v, i) => (
              <Row key={i}>
                <RowHead $selected={v.selected}><RowArrow /></RowHead>
                <NameCell $selected={v.selected}>{v.name}</NameCell>
                <UnitCell><Value $style={v.style ?? "plain"}>{v.unit}</Value></UnitCell>
                <NumberCell><Value $style={v.style ?? "plain"}>{v.value}</Value></NumberCell>
              </Row>
            ))}
          </tbody>
        </Table>
      </PanelInner>
    </PanelBorder>
  </VariablePanel>
);

const Workspace = () => (
  <Main>
    <SheetTabs>
      <SheetTab>
        <svg width="102" height="18" viewBox="0 0 102 18">
          <path d="M0 18C10 17 13 2 24 .5H99.500l1.500 1.500V18" fill="#c1d4ea" stroke="#8698b0" />
        </svg>
        <SheetLabel>
          主工艺流程
          <button aria-label="关闭标签"><svg width="8" height="8" viewBox="0 0 8 8"><path d="m1 1 6 6M7 1 1 7" stroke="#8c9db3" strokeWidth="1.500" /></svg></button>
        </SheetLabel>
      </SheetTab>
      <AddSheet aria-label="新建标签"><svg width="10" height="10" viewBox="0 0 10 10"><path d="M5 0v10M0 5h10" stroke="#444c57" strokeWidth="2" /></svg></AddSheet>
      <SheetMenu aria-label="标签列表"><Caret color="#1e3c66" w={8} /></SheetMenu>
    </SheetTabs>
    <Frame>
      <FrameInner>
        <Viewport>
          <Canvas>
            <CanvasTitle>《水环真空泵模块》搭建</CanvasTitle>
            <Flowsheet />
            <VariableTable />
            <InfoButton aria-label="信息">
              <svg width="20" height="20" viewBox="0 0 20 20">
                <circle cx="10" cy="10" r="10" fill="#2583c5" />
                <circle cx="11.500" cy="5" r="1.300" fill="#fff" />
                <path d="M8 8.500h3L9.500 15h2" fill="none" stroke="#fff" strokeWidth="1.800" />
              </svg>
            </InfoButton>
          </Canvas>
          <ScrollBar $vertical>
            <ScrollArrow aria-label="向上"><Chevron /></ScrollArrow>
            <ScrollSpace $grow={66} /><ScrollThumb $grow={641} /><ScrollSpace $grow={66} />
            <ScrollArrow aria-label="向下"><Chevron turn={180} /></ScrollArrow>
          </ScrollBar>
          <ScrollBar>
            <ScrollArrow aria-label="向左"><Chevron turn={-90} /></ScrollArrow>
            <ScrollSpace $grow={137} /><ScrollThumb $grow={1378} /><ScrollSpace $grow={141} />
            <ScrollArrow aria-label="向右"><Chevron turn={90} /></ScrollArrow>
          </ScrollBar>
        </Viewport>
      </FrameInner>
    </Frame>
    <BottomTabs><BottomTab>模型选项版</BottomTab></BottomTabs>
  </Main>
);

const Status = () => (
  <StatusBar>
    结果可供查询
    <CheckButton>检查状态</CheckButton>
    <ZoomArea>
      <ZoomText htmlFor="zoom">214%</ZoomText>
      <ToolButton $w={15} aria-label="缩小">
        <svg width="15" height="15" viewBox="0 0 15 15"><circle cx="7.500" cy="7.500" r="6.500" fill="#c3d1e2" stroke="#4c5968" /><path d="M4 7.500h7" stroke="#3c4653" strokeWidth="2" /></svg>
      </ToolButton>
      <ZoomSlider id="zoom" type="range" aria-label="缩放" min="0" max="100" defaultValue="54" />
      <ToolButton $w={15} aria-label="放大">
        <svg width="15" height="15" viewBox="0 0 15 15"><circle cx="7.500" cy="7.500" r="6.500" fill="#c3d1e2" stroke="#4c5968" /><path d="M4 7.500h7M7.500 4v7" stroke="#3c4653" strokeWidth="2" /></svg>
      </ToolButton>
      <ToolButton $w={24} aria-label="适应窗口">
        <svg width="16" height="16" viewBox="0 0 16 16">
          <rect x=".5" y=".5" width="15" height="15" rx="2" fill="#e4eefa" stroke="#5e8cc8" />
          <path d="M8 1.500v4M6.500 4 8 5.500 9.500 4M8 14.500v-4M6.500 12 8 10.500 9.500 12M1.500 8h4M4 6.500 5.500 8 4 9.500M14.500 8h-4M12 6.500 10.500 8l1.500 1.500" fill="none" stroke="#3c4653" />
        </svg>
      </ToolButton>
    </ZoomArea>
  </StatusBar>
);

export default function App() {
  return (
    <>
      <GlobalStyle />
      <Window>
        <TopBar />
        <RibbonBar />
        <Work>
          <Sidebar />
          <Workspace />
        </Work>
        <Status />
      </Window>
    </>
  );
}
